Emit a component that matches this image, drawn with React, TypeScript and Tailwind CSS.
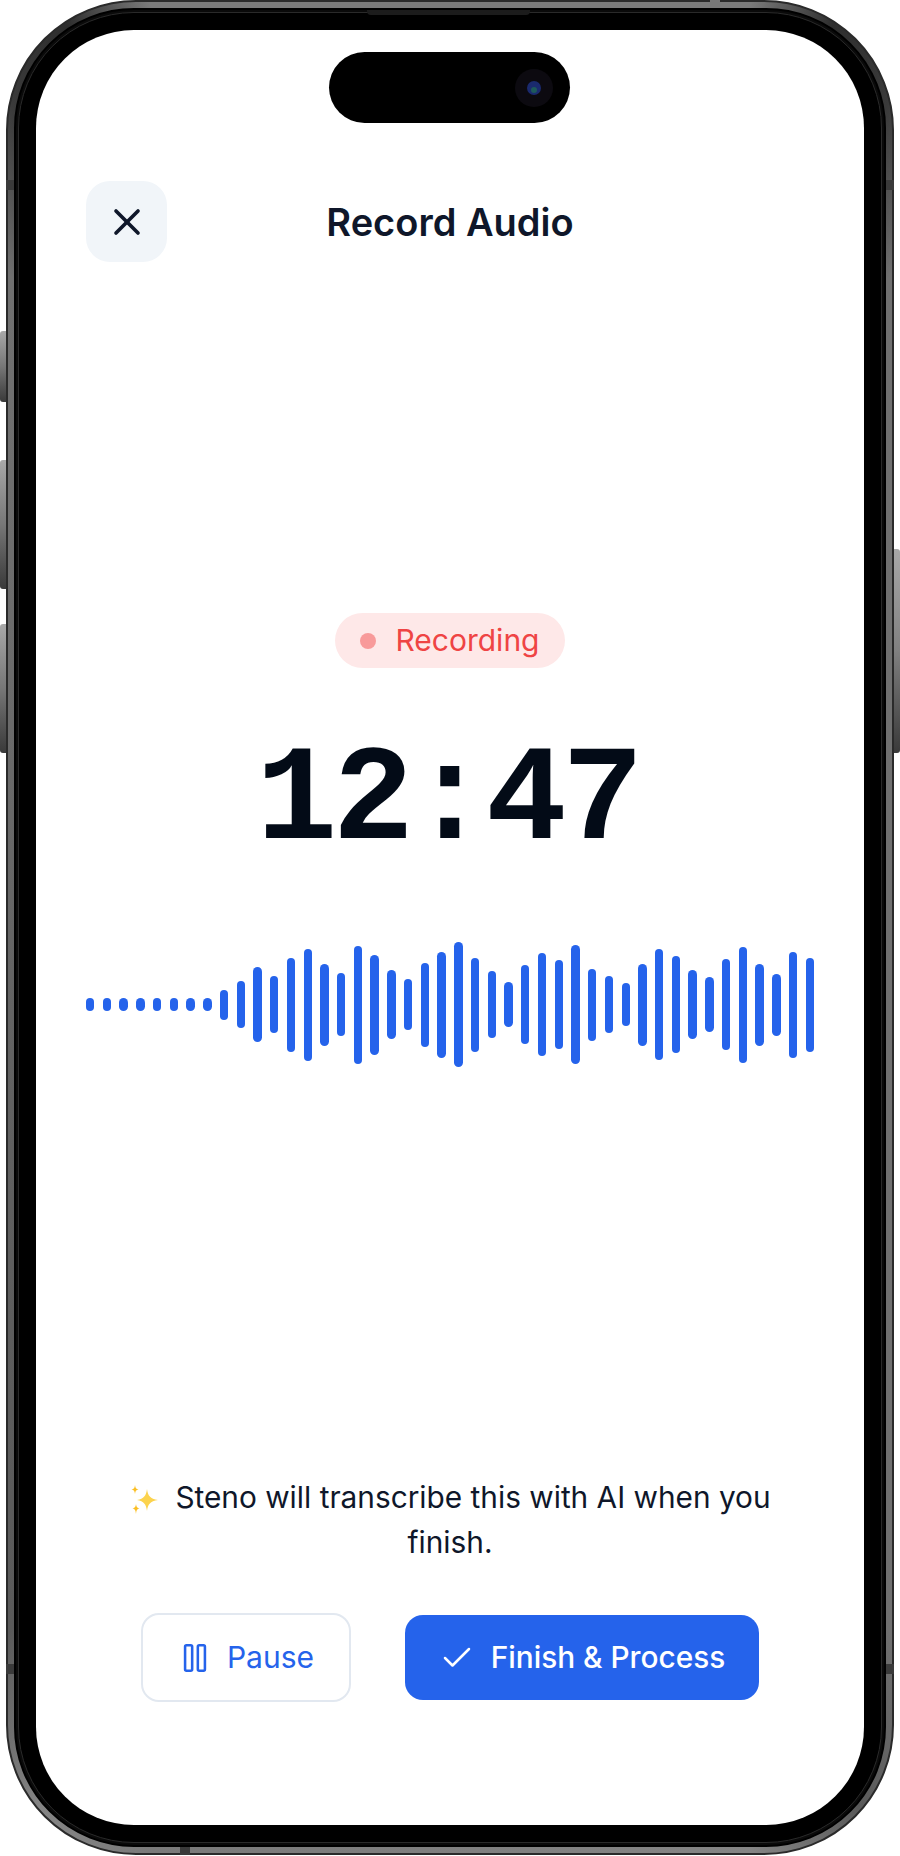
import { X, Pause, Check } from "lucide-react";

const bars = [12.5,12.5,12.5,12.5,12.5,12.5,12.5,12.5,30,47,75,57,94,112,82,63,118,100,69,51,84,106,125,94,67,45,79,103,89,119,72,57,43,82,111,97,69,55,91,116,82,62,106,94];

function Sparkles() {
  return (
    <svg width="30" height="30" viewBox="0 0 30 30" className="inline-block align-[-6px] mr-[16px]" aria-label="sparkles">
      <path d="M18 5 C19 12 21 14.5 29 16 C21 17.5 19 20 18 27 C17 20 15 17.5 8 16 C15 14.5 17 12 18 5Z" fill="#fcd34d" />
      <path d="M6 1 C6.4 4 7 5 9.5 5.5 C7 6 6.4 7 6 10 C5.6 7 5 6 2.5 5.5 C5 5 5.6 4 6 1Z" fill="#fbbf24" />
      <path d="M7 20 C7.4 23 8 23.6 10.5 24.5 C8 25 7.4 26 7 30 C6.6 26 6 25 3.5 24.5 C6 23.6 6.6 23 7 20Z" fill="#fbbf24" />
    </svg>
  );
}

export default function App() {
  return (
    <div className="relative w-[900px] h-[1856px] bg-white overflow-hidden font-['Inter',sans-serif]">
      {/* side buttons */}
      <div className="absolute left-0 top-[331px] w-[7px] h-[71px] rounded-l-[3px] bg-gradient-to-b from-[#a8a8a8] via-[#777777] to-[#3a3a3a]" />
      <div className="absolute left-0 top-[460px] w-[7px] h-[129px] rounded-l-[3px] bg-gradient-to-b from-[#a8a8a8] via-[#777777] to-[#3a3a3a]" />
      <div className="absolute left-0 top-[624px] w-[7px] h-[129px] rounded-l-[3px] bg-gradient-to-b from-[#a8a8a8] via-[#777777] to-[#3a3a3a]" />
      <div className="absolute right-0 top-[549px] w-[7px] h-[204px] rounded-r-[3px] bg-gradient-to-b from-[#a8a8a8] via-[#808080] to-[#3a3a3a]" />

      {/* metal frame */}
      <div className="absolute left-[6px] top-0 w-[888px] h-[1855px] rounded-[130px] bg-[conic-gradient(#7a7a7a_0deg,#7a7a7a_18deg,#2e2e2e_23deg,#3a3a3a_28deg,#707070_34deg,#707070_148deg,#5a5a5a_155deg,#858585_162deg,#7a7a7a_198deg,#858585_205deg,#5a5a5a_212deg,#707070_326deg,#3a3a3a_332deg,#2e2e2e_337deg,#7a7a7a_342deg,#7a7a7a_360deg)] border-[2px] border-[#2a2a2a] p-[6px]">
        <div className="w-full h-full rounded-[120px] bg-[#0a0a0a] border-[2px] border-[#000000] p-[2px]">
          <div className="w-full h-full rounded-[116px] bg-black border border-[#2a2a2a] p-[17px]">
            {/* screen */}
            <div className="relative w-full h-full rounded-[98px] bg-white overflow-hidden flex flex-col px-[50px] pt-[151px] pb-[123px]">
              {/* dynamic island */}
              <div className="absolute left-[293px] top-[22px] w-[241px] h-[71px] rounded-full bg-black">
                <div className="absolute left-[186px] top-[17px] w-[38px] h-[38px] rounded-full bg-[#0c0a10] flex items-center justify-center">
                  <div className="w-[14px] h-[14px] rounded-full bg-[#1a2a6e] flex items-end justify-center">
                    <div className="w-[6px] h-[6px] mb-[2px] rounded-full bg-[#1d5a5a]" />
                  </div>
                </div>
              </div>

              {/* header */}
              <div className="grid grid-cols-[81px_1fr_81px] items-center">
                <button className="w-[81px] h-[81px] rounded-[24px] bg-[#f1f5f9] flex items-center justify-center text-[#0f172a]">
                  <X size={44} strokeWidth={2} />
                </button>
                <h1 className="text-center text-[38px] leading-[46px] font-semibold text-[#0f172a]">Record Audio</h1>
                <div />
              </div>

              {/* status */}
              <div className="mt-[351px] flex justify-center">
                <div className="h-[55px] w-[230px] rounded-full bg-[#fee8e8] flex items-center justify-center gap-[19px]">
                  <span className="w-[16px] h-[16px] rounded-full bg-[#f89a9a]" />
                  <span className="text-[30px] text-[#ef4444]">Recording</span>
                </div>
              </div>

              {/* timer */}
              <div className="mt-[67px] pr-[5px] text-center text-[135px] leading-[135px] font-bold tracking-[-4.5px] text-[#030b17] font-['Liberation_Mono',monospace]">
                12:47
              </div>

              {/* waveform */}
              <div className="mt-[72px] h-[125px] flex items-center justify-between w-[728px]">
                {bars.map((h, i) => (
                  <div key={i} className="w-[8.4px] rounded-full bg-[#2563eb]" style={{ height: h }} />
                ))}
              </div>

              {/* bottom */}
              <div className="mt-auto">
                <p className="mx-auto w-[680px] text-center text-[29.8px] leading-[45px] text-[#0f172a]">
                  <Sparkles />
                  Steno will transcribe this with AI when you finish.
                </p>
                <div className="mt-[48px] flex items-center justify-center gap-[54px]">
                  <button className="w-[210px] h-[89px] rounded-[18px] border-[2.5px] border-[#e2e8f0] bg-white flex items-center justify-center gap-[15px] text-[#2563eb] text-[30px]">
                    <Pause size={34} strokeWidth={1.8} />
                    Pause
                  </button>
                  <button className="w-[354px] h-[85px] rounded-[18px] bg-[#2563eb] flex items-center justify-center gap-[16px] text-white text-[29.8px] font-medium">
                    <Check size={36} strokeWidth={1.7} />
                    Finish &amp; Process
                  </button>
                </div>
              </div>
            </div>
          </div>
        </div>
      </div>

      {/* antenna bands */}
      <div className="absolute left-[6px] top-[180px] w-[8px] h-[10px] bg-[#3a3a3a]" />
      <div className="absolute right-[6px] top-[180px] w-[8px] h-[10px] bg-[#3a3a3a]" />
      <div className="absolute left-[6px] top-[1664px] w-[8px] h-[10px] bg-[#3a3a3a]" />
      <div className="absolute right-[6px] top-[1664px] w-[8px] h-[10px] bg-[#3a3a3a]" />
      <div className="absolute left-[180px] top-[1847px] w-[10px] h-[8px] bg-[#3a3a3a]" />
      <div className="absolute left-[710px] top-0 w-[10px] h-[8px] bg-[#777777]" />
      <div className="absolute left-[367px] top-[10px] w-[163px] h-[5px] rounded-b-[4px] bg-[#1c1c1c]" />
    </div>
  );
}
